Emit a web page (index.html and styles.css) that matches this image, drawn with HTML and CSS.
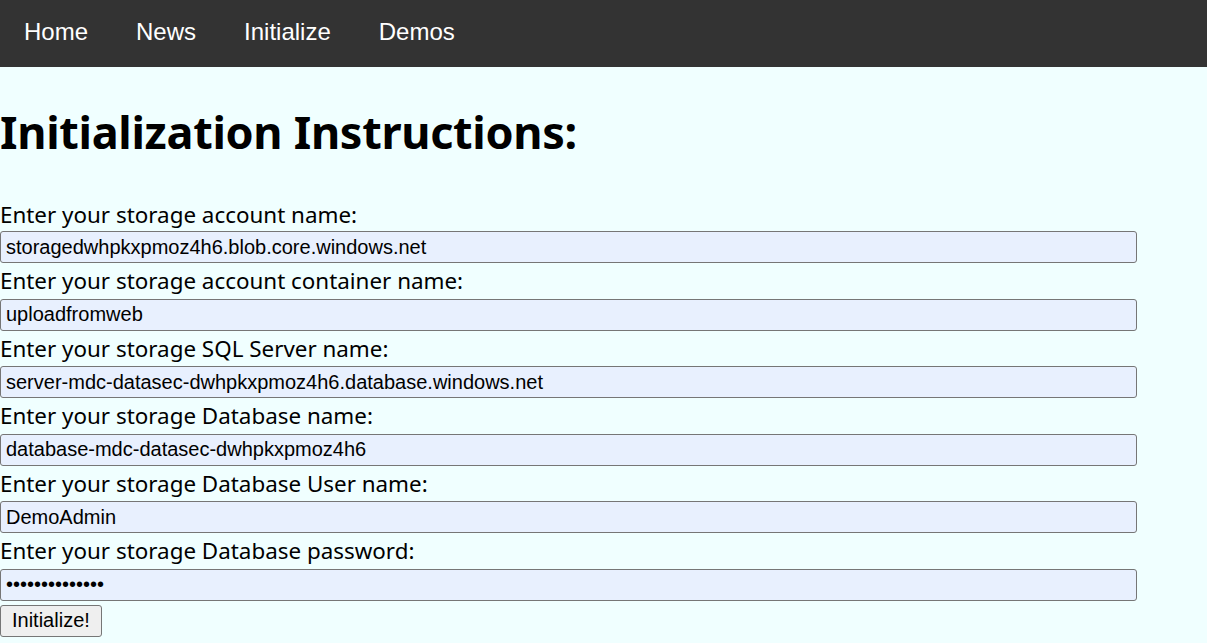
FILE: index.html
```html
<!DOCTYPE html>
<html>
<head>
<meta charset="utf-8">
<link rel="stylesheet" href="styles.css">
</head>
<body>
<nav class="topnav">
  <a href="#">Home</a>
  <a href="#">News</a>
  <a href="#">Initialize</a>
  <a href="#">Demos</a>
</nav>
<main class="content">
  <h1 class="title">Initialization Instructions:</h1>
  <form class="form">
    <label class="lbl">Enter your storage account name:</label>
    <input class="field" type="text" value="storagedwhpkxpmoz4h6.blob.core.windows.net">
    <label class="lbl">Enter your storage account container name:</label>
    <input class="field" type="text" value="uploadfromweb">
    <label class="lbl">Enter your storage SQL Server name:</label>
    <input class="field" type="text" value="server-mdc-datasec-dwhpkxpmoz4h6.database.windows.net">
    <label class="lbl">Enter your storage Database name:</label>
    <input class="field" type="text" value="database-mdc-datasec-dwhpkxpmoz4h6">
    <label class="lbl">Enter your storage Database User name:</label>
    <input class="field" type="text" value="DemoAdmin">
    <label class="lbl">Enter your storage Database password:</label>
    <input class="field" type="password" value="ABCDEFGHIJKLMN">
    <div class="actions"><button class="btn" type="button">Initialize!</button></div>
  </form>
</main>
</body>
</html>
```
FILE: styles.css
```css
html, body {
  margin: 0;
  padding: 0;
}
body {
  background: #f0ffff;
  font-family: "Noto Sans", "Open Sans", sans-serif;
  color: #000;
}
.topnav {
  background: #333333;
  height: 67px;
  display: flex;
  align-items: center;
  padding-bottom: 4px;
  box-sizing: border-box;
}
.topnav a {
  color: #ffffff;
  text-decoration: none;
  font-family: "Liberation Sans", Arial, sans-serif;
  font-size: 24px;
  padding: 0 24px;
}
.content {
  padding: 0;
}
.title {
  margin: 33px 0 0 0;
  font-size: 45px;
  font-weight: 700;
  line-height: 64px;
  letter-spacing: -0.3px;
}
.form {
  display: flex;
  flex-direction: column;
  margin-top: 37px;
}
.lbl {
  display: block;
  font-size: 22.4px;
  line-height: 35.5px;
  height: 35.5px;
}
.lbl:first-child {
  line-height: 28px;
  height: 30px;
}
.field {
  box-sizing: border-box;
  width: 1137px;
  height: 32px;
  margin: 0;
  padding: 0 5px;
  border: 1px solid #767676;
  border-radius: 3px;
  background: #e8f0fe;
  font-family: "Liberation Sans", Arial, sans-serif;
  font-size: 20px;
  color: #000;
}
.actions {
  margin-top: 4px;
}
.btn {
  font-family: "Liberation Sans", Arial, sans-serif;
  font-size: 20px;
  height: 32px;
  padding: 0 11px;
  background: #efefef;
  border: 1px solid #767676;
  border-radius: 3px;
  color: #000;
}
```
